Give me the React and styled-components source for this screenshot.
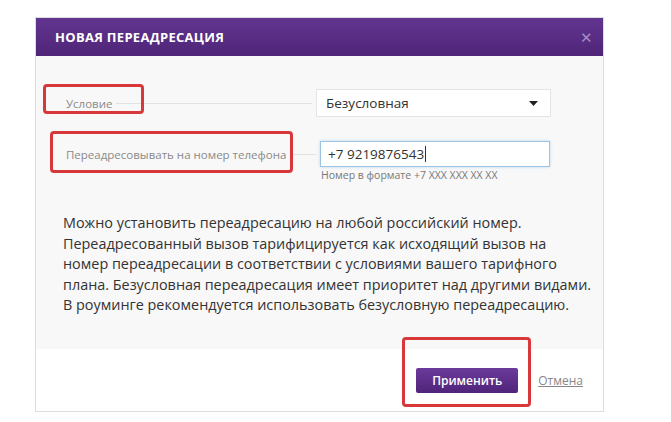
import React from "react";
import styled, { createGlobalStyle } from "styled-components";

const G = createGlobalStyle`
  body { margin:0; background:#fff; font-family: "Open Sans","Noto Sans",sans-serif; }
`;
const Page = styled.div`position:relative; width:671px; height:422px; padding:17px 0 0 35px; box-sizing:border-box;`;
const Dialog = styled.div`width:569px; border:1px solid #ddd; box-sizing:border-box; display:flex; flex-direction:column;`;
const Header = styled.div`height:38px; background:linear-gradient(#62358f,#4e2578); display:flex; align-items:center; justify-content:space-between; padding:0 10px 0 19px;`;
const Title = styled.div`color:#fff; font-weight:700; font-size:13px; letter-spacing:0.3px;`;
const Close = styled.div`color:#a58cc0; font-size:15px;`;
const Body = styled.div`background:#f8f8f8; height:293px; padding:33px 0 0 0; box-sizing:border-box;`;
const Row = styled.div`display:flex; align-items:center; height:${p=>p.h}px; margin-bottom:${p=>p.mb||0}px;`;
const Label = styled.div`color:#8a8a8a; font-size:11.5px; padding-left:${p=>p.pl}px; white-space:nowrap;`;
const Line = styled.div`flex:1; height:1px; background:#e2e2e2; margin:0 4px;`;
const Select = styled.div`width:235px; height:28px; background:#fff; border:1px solid #e4e4e4; box-sizing:border-box; margin-right:52px; display:flex; align-items:center; justify-content:space-between; padding:0 12px 0 9px; font-size:13.5px; color:#333;`;
const Input = styled.div`width:230px; height:26px; background:#fff; border:1px solid #9cc3e4; box-shadow:0 0 3px #bcd8f0; box-sizing:border-box; margin-right:53px; display:flex; align-items:center; padding-left:7px; font-size:13.5px; color:#333;`;
const Caret = styled.span`display:inline-block; width:1px; height:16px; background:#333; margin-left:1px;`;
const Hint = styled.div`font-size:10.5px; color:#777; padding-left:285px; margin-top:1px;`;
const Text = styled.p`margin:31px 0 0 27px; font-size:14.4px; line-height:20.5px; color:#333; width:530px;`;
const Footer = styled.div`height:62px; background:#fff; display:flex; align-items:center; justify-content:flex-end; padding:0 20px 0 0; gap:20px;`;
const Btn = styled.div`width:102px; height:25px; background:linear-gradient(#6b3a9b,#4f2479); border-radius:2px; color:#fff; font-size:12px; font-weight:600; display:flex; align-items:center; justify-content:center;`;
const Cancel = styled.a`color:#888; font-size:12px; text-decoration:underline;`;
const Mark = styled.div`position:absolute; border:3px solid #d9383a; border-radius:4px; box-sizing:border-box;`;

export default function App(){
  return <Page><G/>
    <Dialog>
      <Header><Title>НОВАЯ ПЕРЕАДРЕСАЦИЯ</Title><Close>✕</Close></Header>
      <Body>
        <Row h={28} mb={24}><Label pl={30}>Условие</Label><Line/><Select>Безусловная<svg width="9" height="5"><path d="M0 0h9L4.5 5z" fill="#222"/></svg></Select></Row>
        <Row h={26}><Label pl={30}>Переадресовывать на номер телефона</Label><Line/><Input>+7 9219876543<Caret/></Input></Row>
        <Hint>Номер в формате +7 XXX XXX XX XX</Hint>
        <Text>Можно установить переадресацию на любой российский номер. Переадресованный вызов тарифицируется как исходящий вызов на номер переадресации в соответствии с условиями вашего тарифного плана. Безусловная переадресация имеет приоритет над другими видами. В роуминге рекомендуется использовать безусловную переадресацию.</Text>
      </Body>
      <Footer><Btn>Применить</Btn><Cancel>Отмена</Cancel></Footer>
    </Dialog>
    <Mark style={{left:43,top:84,width:101,height:30}}/>
    <Mark style={{left:50,top:131,width:243,height:42}}/>
    <Mark style={{left:402,top:337,width:129,height:70}}/>
  </Page>;
}
